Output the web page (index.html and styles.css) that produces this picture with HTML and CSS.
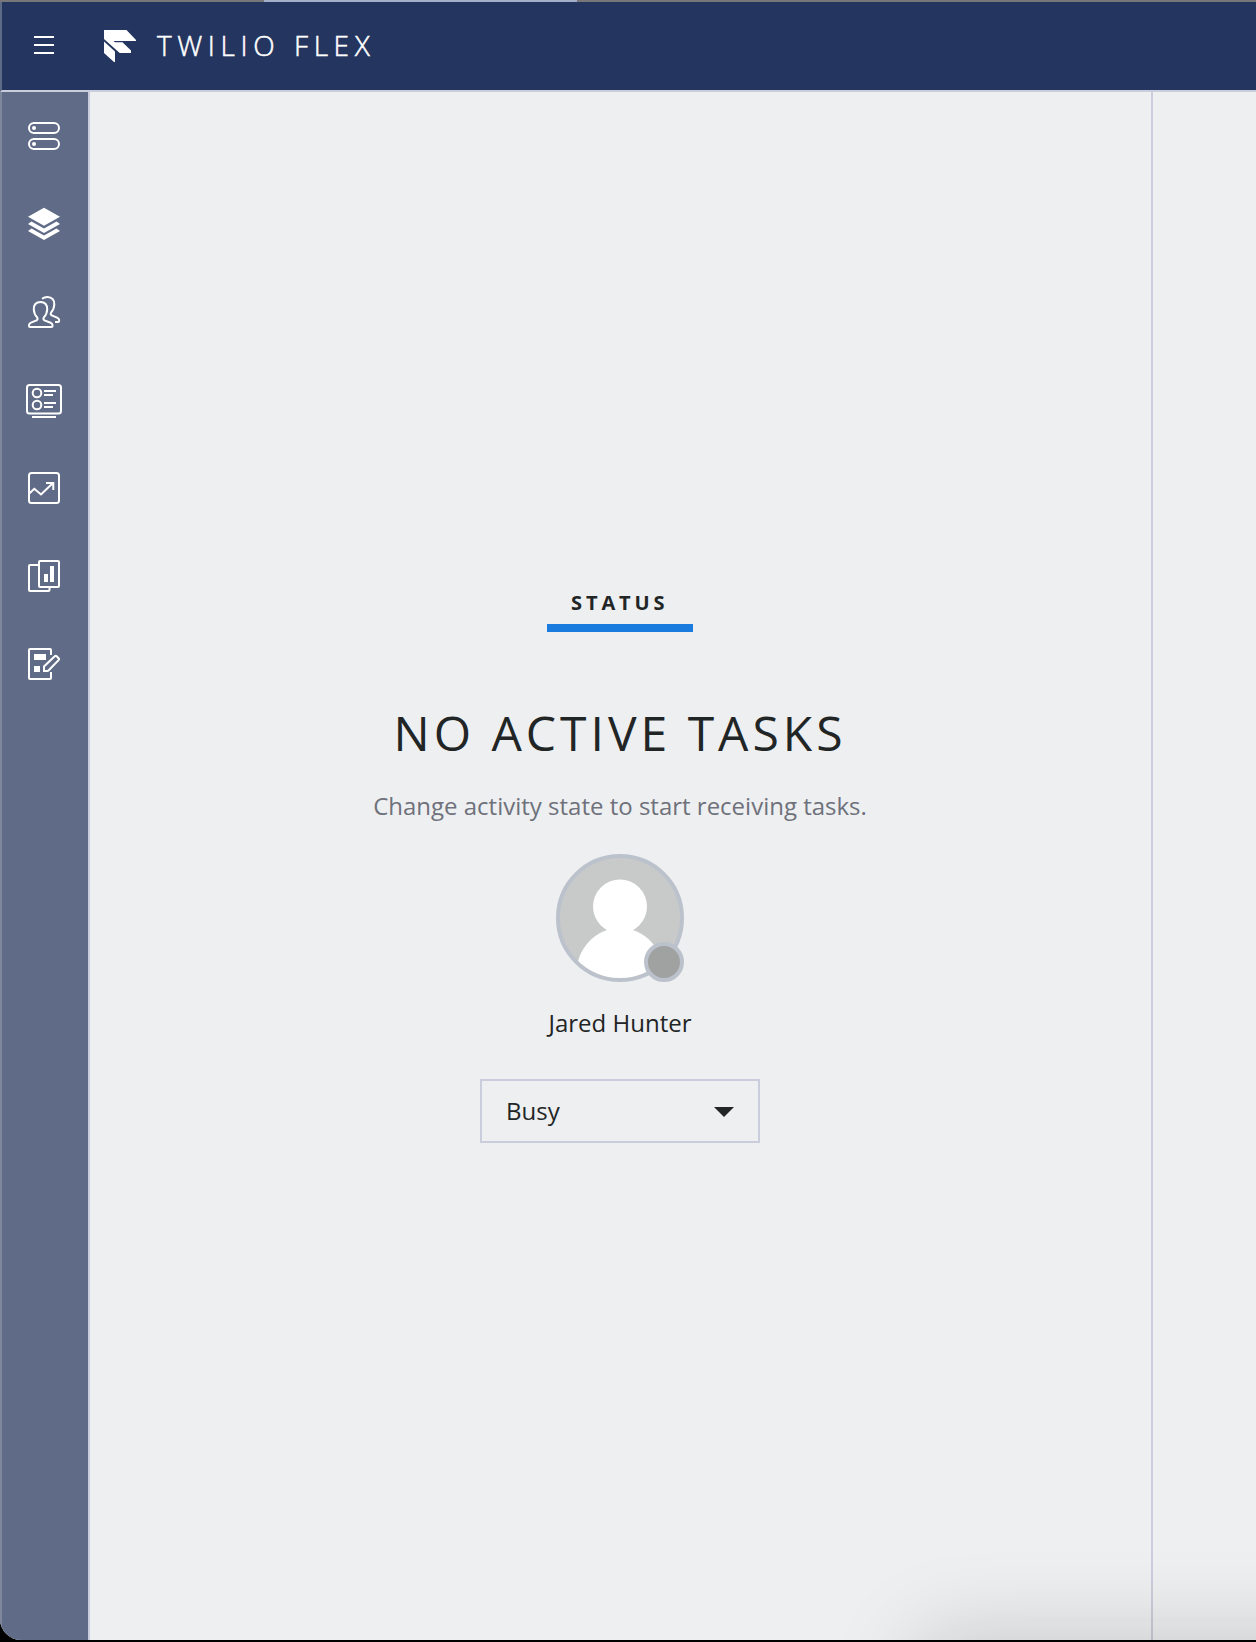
FILE: index.html
```html
<!DOCTYPE html>
<html lang="en">
<head>
<meta charset="utf-8">
<title>Twilio Flex</title>
<link rel="stylesheet" href="styles.css">
</head>
<body>
<div class="app">
  <div class="strip"><span class="strip-tab"></span></div>
  <header class="header">
    <svg class="menu" viewBox="0 0 20 18"><path d="M0 1h20M0 9h20M0 17h20"/></svg>
    <svg class="logo" viewBox="0 0 32 32"><path d="M0 0h22.5L32 10v1H9.5l1.5 1.3h7.5L27 20.5V23H15.7L0 9z"/><path d="M0 11.5 11 21.5V32h-1L0 23z"/></svg>
    <span class="brand">TWILIO FLEX</span>
  </header>
  <div class="body">
    <nav class="sidebar">
      <a class="item"><svg class="icon" viewBox="0 0 48 48"><rect x="9" y="11" width="30" height="10" rx="5"/><rect x="9" y="27" width="30" height="10" rx="5"/><g class="solid"><circle cx="14" cy="16" r="2"/><circle cx="14" cy="32" r="2"/></g></svg></a>
      <a class="item"><svg class="icon" viewBox="0 0 48 48"><g class="solid"><path d="M24 7.7 40 16.8 24 25.8 8 16.8z"/><path d="M8 24l3.5-2.500L24 28.500l12.500-7L40 24l-16 9z"/><path d="M8 31l3.500-2.500L24 35.500l12.500-7L40 31l-16 9z"/></g></svg></a>
      <a class="item"><svg class="icon" viewBox="0 0 48 48"><path d="M20.500 14c-4.500 0-7 2.800-6.700 7.500.2 3.500 1.400 6 3.400 8 .8 1.100.3 2.200-.7 2.900l-5.500 2.300c-1.300.7-2 1.400-2 2.300v1c0 .7.3 1 1 1h21.500c.7 0 1-.3 1-1v-1c0-.9-.7-1.600-2-2.300l-6-2.300c-1-.7-1.500-1.800-.7-2.900 2-2 3.200-4.500 3.400-8 .3-4.700-2.200-7.500-6.700-7.500z"/><path d="M22 10.700c1.500-1.100 3.300-1.700 5.500-1.700 4.700 0 7 3.300 6.800 7.500-.2 3.500-1.200 6-3.200 8-.8 1.100-.3 2.200.7 2.900l5.300 2.300c1.300.7 2 1.200 2 2.100v1.200c0 .7-.3 1-1 1H35"/></svg></a>
      <a class="item"><svg class="icon" viewBox="0 0 48 48"><rect x="7" y="9" width="34" height="28.500" rx="2.500"/><path d="M12 41h24M24 15h12M24 19h9M24 27h12M24 31h9"/><circle cx="17" cy="17" r="4.300"/><circle cx="17" cy="29" r="4.300"/></svg></a>
      <a class="item"><svg class="icon" viewBox="0 0 48 48"><rect x="9" y="9" width="30" height="30" rx="2.500"/><path d="M9 29.800l5.300-5L21 30.500 33 19M26 19h7.300v7"/></svg></a>
      <a class="item"><svg class="icon" viewBox="0 0 48 48"><rect x="19" y="9" width="20" height="26" rx="1"/><path d="M19 13h-9q-1 0-1 1v24q0 1 1 1h18.500q1 0 1-1v-3"/><g class="solid"><path d="M24 22h4v8h-4zM30 14h4v16h-4z"/></g></svg></a>
      <a class="item"><svg class="icon" viewBox="0 0 48 48"><path d="M31 15v-5q0-1-1-1H10q-1 0-1 1v28q0 1 1 1h20q1 0 1-1v-6"/><path d="M24 31v-4.500L35 16q.7-.6 1.400 0l2.400 2.500q.6.700 0 1.400L28.500 30.500q-.5.500-1.200.5z"/><g class="solid"><path d="M14 14h12v6H14zM14 26h6v6h-6z"/></g></svg></a>
    </nav>
    <main class="main">
      <div class="tab">STATUS</div>
      <h1 class="title">NO ACTIVE TASKS</h1>
      <p class="hint">Change activity state to start receiving tasks.</p>
      <div class="avatar">
        <svg class="photo" viewBox="0 0 120 120"><circle cx="60" cy="48.500" r="27"/><ellipse cx="60" cy="117" rx="44" ry="47"/></svg>
        <span class="presence"></span>
      </div>
      <div class="name">Jared Hunter</div>
      <div class="select"><span class="value">Busy</span><svg class="caret" viewBox="0 0 20 10"><path d="M0 0h20L10 10z"/></svg></div>
    </main>
    <aside class="aside"></aside>
  </div>
  <div class="shade"></div>
</div>
</body>
</html>
```
FILE: styles.css
```css
* { box-sizing: border-box; }
body { margin: 0; background: #000; font-family: "Open Sans", "Noto Sans", sans-serif; color: #222525; }
.app {
  position: relative;
  display: flex;
  flex-direction: column;
  height: 1640px;
  margin-bottom: 2px;
  overflow: hidden;
  border-bottom-left-radius: 21px;
  background: #edeff1;
}
.strip { height: 2px; flex: none; padding-left: 264px; background: #777779; }
.strip-tab { display: block; width: 313px; height: 2px; background: #a3aec8; }
.header {
  display: flex;
  align-items: center;
  flex: none;
  height: 90px;
  padding-left: 32px;
  border-left: 2px solid #5e6b87;
  border-bottom: 2px solid #cacddb;
  background: #24365f;
}
.menu { width: 20px; height: 18px; margin: 0 50px 2px 0; stroke: #fff; stroke-width: 2; }
.logo { width: 32px; height: 32px; margin-right: 21px; fill: #fff; }
.brand {
  margin-bottom: 3px;
  font-size: 28px;
  font-weight: 300;
  letter-spacing: 5.6px;
  word-spacing: 1px;
  line-height: 40px;
  color: #fff;
  -webkit-text-stroke: .5px #fff;
}
.body { display: flex; flex: 1; min-height: 0; }
.sidebar {
  width: 90px;
  flex: none;
  border-left: 2px solid #7f879a;
  border-right: 2px solid #cacddb;
  background: #606c87;
}
.item { display: flex; align-items: center; height: 88px; padding-left: 18px; }
.icon { width: 48px; height: 48px; fill: none; stroke: #fff; stroke-width: 2; }
.solid { fill: #fff; stroke: none; }
.main { display: flex; flex-direction: column; align-items: center; width: 1061px; padding: 492px 1px 0 0; }
.tab {
  height: 48px;
  padding: 6px 22px 0 24px;
  width: 146px;
  border-bottom: 8px solid #197bdd;
  font-size: 20px;
  font-weight: 700;
  line-height: 26px;
  letter-spacing: 3.9px;
}
.title { margin: 68px 0 0; font-size: 48px; font-weight: 400; line-height: 66px; letter-spacing: 4px; white-space: nowrap; }
.hint { margin: 23px 0 0; font-size: 24px; line-height: 34px; color: #6f717b; }
.avatar { position: relative; width: 128px; height: 128px; margin-top: 31px; border: 4px solid #bcc2cc; border-radius: 50%; background: #c8caca; }
.photo { display: block; width: 120px; height: 120px; border-radius: 50%; fill: #fff; }
.presence { position: absolute; right: -4px; bottom: -4px; width: 40px; height: 40px; border: 4px solid #bcc2cc; border-radius: 50%; background: #a0a1a1; }
.name { margin-top: 24px; font-size: 24px; line-height: 34px; }
.select { display: flex; align-items: center; justify-content: space-between; width: 280px; height: 64px; margin-top: 39px; padding: 0 24px; border: 2px solid #cacddb; font-size: 24px; }
.value { margin-bottom: 2px; }
.caret { width: 20px; height: 10px; margin-top: 2px; fill: #222525; }
.aside { flex: 1; border-left: 2px solid #cacddb; }
.shade { position: absolute; left: 940px; top: 1660px; width: 500px; height: 100px; box-shadow: 0 0 90px 20px rgba(0, 0, 0, .18); }
```
